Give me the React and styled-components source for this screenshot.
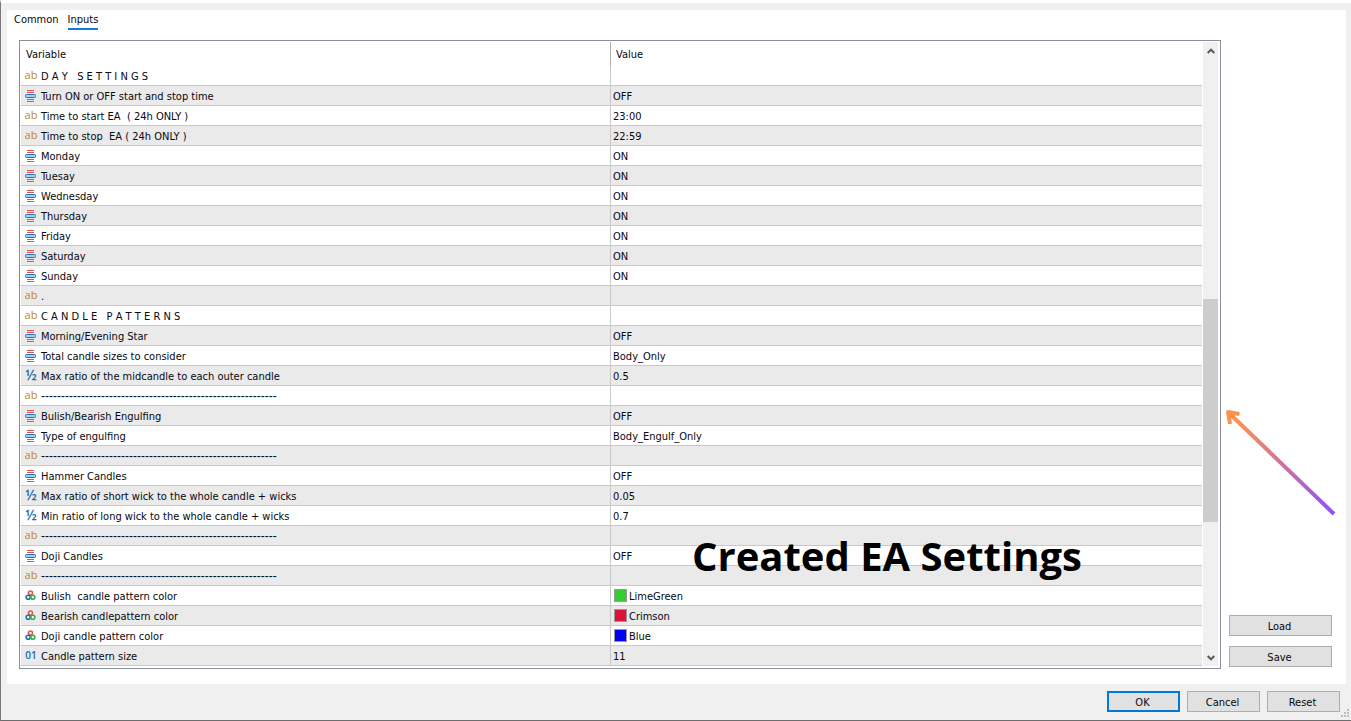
import React from "react";
import styled, { createGlobalStyle } from "styled-components";

const GlobalStyle = createGlobalStyle`
  *, *::before, *::after { box-sizing: border-box; }
  body {
    margin: 0;
    background: #f0f0f0;
    color: #08080e;
    font-family: "DejaVu Sans Condensed", "Noto Sans", sans-serif;
    font-size: 11px;
    line-height: 16px;
  }
  button { font: inherit; color: inherit; }
`;

const Dialog = styled.main`
  display: flex;
  flex-direction: column;
  min-height: 100vh;
  border-top: 3px solid #fff;
  border-left: 1px solid #787878;
  border-bottom: 1px solid #6c6c6c;
  background: #f0f0f0;
`;

const Panel = styled.section`
  flex: 1;
  display: flex;
  flex-direction: column;
  margin: 7px 5px 0 6px;
  padding: 0 14px 15px 12px;
  background: #fff;
`;

const Tabs = styled.nav`
  display: flex;
  gap: 9px;
  height: 30px;
  margin-left: -5px;
  align-items: flex-start;
`;

const Tab = styled.button`
  height: 20px;
  padding: 1px 0 0;
  border: 0;
  border-bottom: 2px solid ${(p) => (p.$active ? "#0f7bd8" : "transparent")};
  background: none;
`;

const Body = styled.div`
  flex: 1;
  display: flex;
  gap: 8px;
`;

const ListBox = styled.div`
  position: relative;
  flex: 1;
  display: flex;
  padding: 1px 2px 2px 0;
  border: 1px solid #8b8f9c;
`;

const Table = styled.table`
  flex: 1;
  align-self: flex-start;
  table-layout: fixed;
  width: 100%;
  border-spacing: 0;
`;

const HeadCell = styled.th`
  width: 50%;
  height: 24px;
  padding: 2px 6px 0;
  font-weight: 400;
  text-align: left;
  & + & { padding-left: 5px; }
  &:first-child { border-right: 1px solid #b0b0b0; }
`;

const Row = styled.tr`
  background: ${(p) => (p.$shaded ? "#eaeaea" : "#fff")};
`;

const Cell = styled.td`
  height: 20px;
  padding: 0 2px;
  border-bottom: 1px solid #c9c9c9;
  white-space: pre;
`;

const NameCell = styled(Cell)`
  padding: 0 4px;
  border-left: 1px solid #fff;
  border-right: 1px solid #c9c9c9;
`;

const CellContent = styled.div`
  display: flex;
  align-items: center;
  gap: ${(p) => p.$gap || 4}px;
  height: 19px;
  overflow: hidden;
`;

const Label = styled.span`
  padding-top: ${(p) => (p.$rule ? 1 : 2)}px;
  ${(p) => p.$rule && 'font-family: "Liberation Sans", sans-serif; font-size: 12px;'}
`;

const IconBox = styled.span`
  flex: none;
  display: flex;
  align-items: center;
  justify-content: center;
  width: 12px;
  height: 19px;
  padding-top: 1px;
`;

const TypeMark = styled.span`
  color: ${(p) => p.$color};
  font-family: "Open Sans", sans-serif;
  font-size: ${(p) => p.$size}px;
  font-weight: ${(p) => p.$weight || 400};
  line-height: 14px;
  padding-bottom: 3px;
`;

const Swatch = styled.span`
  width: 13px;
  height: 13px;
  margin-left: 1px;
  border: 1px solid #999;
  background: ${(p) => p.$color};
`;

const ScrollBar = styled.div`
  flex: none;
  display: flex;
  flex-direction: column;
  width: 15px;
  margin: 0 0 0 1px;
  background: #f0f0f0;
`;

const ScrollButton = styled.button`
  display: flex;
  align-items: center;
  justify-content: center;
  height: 17px;
  padding: 0;
  border: 0;
  background: none;
`;

const Track = styled.div`
  flex: ${(p) => p.$share};
  background: ${(p) => (p.$thumb ? "#cdcdcd" : "transparent")};
`;

const Side = styled.aside`
  position: relative;
  display: flex;
  flex-direction: column;
  justify-content: flex-end;
  gap: 10px;
  width: 103px;
  padding-bottom: 2px;
`;

const Button = styled.button`
  height: 21px;
  min-width: 73px;
  padding: 2px 2px 0 0;
  border: ${(p) => (p.$primary ? "2px solid #0078d7" : "1px solid #adadad")};
  background: #e1e1e1;
  line-height: 16px;
`;

const Footer = styled.footer`
  position: relative;
  display: flex;
  justify-content: flex-end;
  gap: 7px;
  padding: 7px 11px 8px;
`;

const Grip = styled.svg`
  position: absolute;
  right: 1px;
  bottom: 2px;
`;

const Caption = styled.h1`
  position: absolute;
  left: 56%;
  top: 487px;
  margin: 0;
  color: #000;
  font-family: "Open Sans", sans-serif;
  font-size: 40px;
  font-weight: 700;
  line-height: 56px;
  white-space: nowrap;
`;

const Arrow = styled.svg`
  position: absolute;
  left: -4px;
  top: 366px;
`;

function EnumIcon() {
  return (
    <svg width="12" height="12" viewBox="0 0 12 12" aria-hidden="true">
      <path d="M2 .5h7M2 2.5h7M2 9.5h7M2 11.5h7" stroke="#e0524c" />
      <rect x=".5" y="4.5" width="10" height="3" rx="1" fill="#9fd4f5" stroke="#1f6cae" />
    </svg>
  );
}

function ColorIcon() {
  return (
    <svg width="12" height="12" viewBox="0 0 12 12" fill="#fff" strokeWidth="1.6" aria-hidden="true">
      <circle cx="5.5" cy="3" r="2" stroke="#e0524c" />
      <circle cx="3.2" cy="7.3" r="2" stroke="#1f6cae" />
      <circle cx="7.8" cy="7.3" r="2" stroke="#2eb04e" />
    </svg>
  );
}

function TypeIcon({ type }) {
  return (
    <IconBox>
      {type === "enum" && <EnumIcon />}
      {type === "color" && <ColorIcon />}
      {type === "string" && <TypeMark $color="#c08618" $size={11}>ab</TypeMark>}
      {type === "double" && <TypeMark $color="#1f6cae" $size={14} $weight={600}>½</TypeMark>}
      {type === "int" && <TypeMark $color="#1f6cae" $size={10} $weight={600}>01</TypeMark>}
    </IconBox>
  );
}

const dashes = "-".repeat(59);

const rows = [
  ["string", "D A Y   S E T T I N G S", ""],
  ["enum", "Turn ON or OFF start and stop time", "OFF"],
  ["string", "Time to start EA  ( 24h ONLY )", "23:00"],
  ["string", "Time to stop  EA ( 24h ONLY )", "22:59"],
  ["enum", "Monday", "ON"],
  ["enum", "Tuesay", "ON"],
  ["enum", "Wednesday", "ON"],
  ["enum", "Thursday", "ON"],
  ["enum", "Friday", "ON"],
  ["enum", "Saturday", "ON"],
  ["enum", "Sunday", "ON"],
  ["string", ".", ""],
  ["string", "C A N D L E   P A T T E R N S", ""],
  ["enum", "Morning/Evening Star", "OFF"],
  ["enum", "Total candle sizes to consider", "Body_Only"],
  ["double", "Max ratio of the midcandle to each outer candle", "0.5"],
  ["string", dashes, ""],
  ["enum", "Bulish/Bearish Engulfing", "OFF"],
  ["enum", "Type of engulfing", "Body_Engulf_Only"],
  ["string", dashes, ""],
  ["enum", "Hammer Candles", "OFF"],
  ["double", "Max ratio of short wick to the whole candle + wicks", "0.05"],
  ["double", "Min ratio of long wick to the whole candle + wicks", "0.7"],
  ["string", dashes, ""],
  ["enum", "Doji Candles", "OFF"],
  ["string", dashes, ""],
  ["color", "Bulish  candle pattern color", "LimeGreen", "#32cd32"],
  ["color", "Bearish candlepattern color", "Crimson", "#dc143c"],
  ["color", "Doji candle pattern color", "Blue", "#0000ff"],
  ["int", "Candle pattern size", "11"],
];

function Chevron({ down }) {
  return (
    <svg width="8" height="6" viewBox="0 0 8 6" fill="none" stroke="#5c5c5c" strokeWidth="2" aria-hidden="true">
      <path d={down ? "M.7 1 4 4.3 7.3 1" : "M.7 5 4 1.7 7.3 5"} />
    </svg>
  );
}

export default function App() {
  return (
    <>
      <GlobalStyle />
      <Dialog>
        <Panel>
          <Tabs>
            <Tab>Common</Tab>
            <Tab $active>Inputs</Tab>
          </Tabs>
          <Body>
            <ListBox>
              <Table>
                <thead>
                  <tr>
                    <HeadCell scope="col">Variable</HeadCell>
                    <HeadCell scope="col">Value</HeadCell>
                  </tr>
                </thead>
                <tbody>
                  {rows.map(([type, name, value, color], i) => (
                    <Row key={i} $shaded={i % 2 === 1}>
                      <NameCell>
                        <CellContent>
                          <TypeIcon type={type} />
                          <Label $rule={name === dashes}>{name}</Label>
                        </CellContent>
                      </NameCell>
                      <Cell>
                        <CellContent $gap={2}>
                          {color && <Swatch $color={color} />}
                          <Label>{value}</Label>
                        </CellContent>
                      </Cell>
                    </Row>
                  ))}
                </tbody>
              </Table>
              <ScrollBar>
                <ScrollButton aria-label="Scroll up"><Chevron /></ScrollButton>
                <Track $share={240} />
                <Track $share={224} $thumb />
                <Track $share={127} />
                <ScrollButton aria-label="Scroll down"><Chevron down /></ScrollButton>
              </ScrollBar>
              <Caption>Created EA Settings</Caption>
            </ListBox>
            <Side>
              <Arrow width="114" height="112" viewBox="0 0 114 112" fill="none" aria-hidden="true">
                <defs>
                  <linearGradient id="fade" gradientUnits="userSpaceOnUse" x1="4" y1="6" x2="110" y2="108">
                    <stop offset="0.1" stopColor="#ff914d" />
                    <stop offset="1" stopColor="#8c52ff" />
                  </linearGradient>
                </defs>
                <path d="M109 108 4 7M14.5 8 3 6 5 18" stroke="url(#fade)" strokeWidth="4" strokeLinejoin="round" />
              </Arrow>
              <Button>Load</Button>
              <Button>Save</Button>
            </Side>
          </Body>
        </Panel>
        <Footer>
          <Button $primary>OK</Button>
          <Button>Cancel</Button>
          <Button>Reset</Button>
          <Grip width="9" height="9" viewBox="0 0 9 9" fill="#bdbdbd" aria-hidden="true">
            <path d="M6 0h2v2h-2zM3 3h2v2h-2zM6 3h2v2h-2zM0 6h2v2h-2zM3 6h2v2h-2zM6 6h2v2h-2z" />
          </Grip>
        </Footer>
      </Dialog>
    </>
  );
}
